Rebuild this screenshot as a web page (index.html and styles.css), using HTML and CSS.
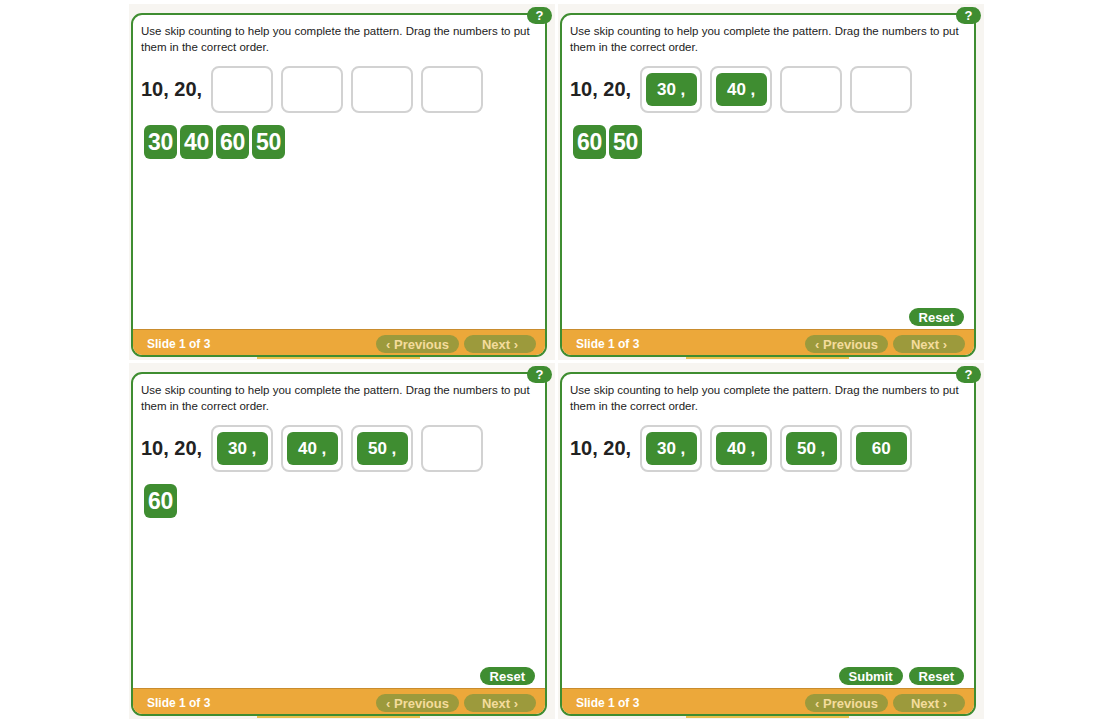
FILE: index.html
```html
<!DOCTYPE html>
<html>
<head>
<meta charset="utf-8">
<link rel="stylesheet" href="styles.css">
</head>
<body>
<div class="grid">
  <!-- Panel 1 -->
  <div class="cell">
    <div class="card">
      <div class="content">
        <p class="prompt">Use skip counting to help you complete the pattern. Drag the numbers to put them in the correct order.</p>
        <div class="pattern">
          <span class="given">10, 20,</span>
          <div class="slot"></div><div class="slot"></div><div class="slot"></div><div class="slot"></div>
        </div>
        <div class="tray">
          <span class="tile">30</span><span class="tile">40</span><span class="tile">60</span><span class="tile">50</span>
        </div>
      </div>
      <div class="footer">
        <span class="slide">Slide 1 of 3</span>
        <div class="nav"><span class="navbtn prev">‹ Previous</span><span class="navbtn next">Next ›</span></div>
      </div>
    </div>
    <div class="strip"></div>
    <span class="help">?</span>
  </div>

  <!-- Panel 2 -->
  <div class="cell">
    <div class="card">
      <div class="content">
        <p class="prompt">Use skip counting to help you complete the pattern. Drag the numbers to put them in the correct order.</p>
        <div class="pattern">
          <span class="given">10, 20,</span>
          <div class="slot"><span class="placed">30 ,</span></div><div class="slot"><span class="placed">40 ,</span></div><div class="slot"></div><div class="slot"></div>
        </div>
        <div class="tray">
          <span class="tile">60</span><span class="tile">50</span>
        </div>
      </div>
      <div class="actions"><span class="action">Reset</span></div>
      <div class="footer">
        <span class="slide">Slide 1 of 3</span>
        <div class="nav"><span class="navbtn prev">‹ Previous</span><span class="navbtn next">Next ›</span></div>
      </div>
    </div>
    <div class="strip"></div>
    <span class="help">?</span>
  </div>

  <!-- Panel 3 -->
  <div class="cell">
    <div class="card">
      <div class="content">
        <p class="prompt">Use skip counting to help you complete the pattern. Drag the numbers to put them in the correct order.</p>
        <div class="pattern">
          <span class="given">10, 20,</span>
          <div class="slot"><span class="placed">30 ,</span></div><div class="slot"><span class="placed">40 ,</span></div><div class="slot"><span class="placed">50 ,</span></div><div class="slot"></div>
        </div>
        <div class="tray">
          <span class="tile">60</span>
        </div>
      </div>
      <div class="actions"><span class="action">Reset</span></div>
      <div class="footer">
        <span class="slide">Slide 1 of 3</span>
        <div class="nav"><span class="navbtn prev">‹ Previous</span><span class="navbtn next">Next ›</span></div>
      </div>
    </div>
    <div class="strip"></div>
    <span class="help">?</span>
  </div>

  <!-- Panel 4 -->
  <div class="cell">
    <div class="card">
      <div class="content">
        <p class="prompt">Use skip counting to help you complete the pattern. Drag the numbers to put them in the correct order.</p>
        <div class="pattern">
          <span class="given">10, 20,</span>
          <div class="slot"><span class="placed">30 ,</span></div><div class="slot"><span class="placed">40 ,</span></div><div class="slot"><span class="placed">50 ,</span></div><div class="slot"><span class="placed">60</span></div>
        </div>
        <div class="tray"></div>
      </div>
      <div class="actions"><span class="action submit">Submit</span><span class="action">Reset</span></div>
      <div class="footer">
        <span class="slide">Slide 1 of 3</span>
        <div class="nav"><span class="navbtn prev">‹ Previous</span><span class="navbtn next">Next ›</span></div>
      </div>
    </div>
    <div class="strip"></div>
    <span class="help">?</span>
  </div>
</div>
</body>
</html>
```
FILE: styles.css
```css
html, body {
  margin: 0;
  padding: 0;
  background: #ffffff;
  font-family: "Liberation Sans", Arial, sans-serif;
  color: #222;
}

.grid {
  display: grid;
  grid-template-columns: 426px 426px;
  grid-auto-rows: 356px;
  column-gap: 3px;
  row-gap: 3px;
  margin-left: 129px;
  padding-top: 4px;
}

.cell {
  position: relative;
  background: #f7f5f1;
  padding: 9px 8px 0 2px;
  box-sizing: border-box;
}

.card {
  box-sizing: border-box;
  height: 344px;
  border: 2px solid #3f8d31;
  border-radius: 11px;
  background: #fff;
  overflow: hidden;
  display: flex;
  flex-direction: column;
}

.content {
  flex: 1;
  padding: 8px 8px 0 8px;
}

.prompt {
  margin: 0;
  font-size: 11.5px;
  line-height: 16px;
  color: #222;
}

.pattern {
  display: flex;
  align-items: center;
  margin-top: 11px;
  height: 47px;
}

.given {
  font-size: 20px;
  font-weight: bold;
  color: #222;
  margin-right: 9px;
}

.slot {
  box-sizing: border-box;
  width: 62px;
  height: 47px;
  border: 2px solid #d2d2d2;
  border-radius: 8px;
  margin-right: 8px;
  display: flex;
  align-items: center;
  justify-content: center;
}

.placed {
  width: 51px;
  height: 33px;
  border-radius: 6px;
  background: #3f8d31;
  color: #fff;
  font-weight: bold;
  font-size: 17px;
  display: flex;
  align-items: center;
  justify-content: center;
}

.tray {
  display: flex;
  gap: 3px;
  margin-top: 12px;
  margin-left: 3px;
}

.tile {
  width: 33px;
  height: 34px;
  border-radius: 6px;
  background: #3f8d31;
  color: #fff;
  font-weight: bold;
  font-size: 23px;
  display: flex;
  align-items: center;
  justify-content: center;
  letter-spacing: -0.3px;
}

.actions {
  display: flex;
  justify-content: flex-end;
  gap: 6px;
  padding: 0 10px 3px 0;
}

.action {
  height: 18px;
  padding: 0 10px;
  min-width: 35px;
  border-radius: 9px;
  background: #3f8d31;
  color: #fff;
  font-weight: bold;
  font-size: 13px;
  display: flex;
  align-items: center;
  justify-content: center;
}

.action.submit {
  min-width: 43px;
}

.footer {
  box-sizing: border-box;
  height: 26px;
  background: #eca83a;
  border-top: 1px solid #c98c2e;
  display: flex;
  align-items: center;
  justify-content: space-between;
  padding: 3px 9px 0 14px;
}

.slide {
  color: #fff;
  font-weight: bold;
  font-size: 12px;
}

.nav {
  display: flex;
  gap: 5px;
}

.navbtn {
  height: 18px;
  border-radius: 9px;
  background: #9c9a3c;
  color: #f4dc9c;
  font-weight: bold;
  font-size: 13px;
  display: flex;
  align-items: center;
  justify-content: center;
}

.navbtn.prev {
  width: 83px;
}

.navbtn.next {
  width: 72px;
}

.strip {
  width: 163px;
  height: 2px;
  margin-left: 126px;
  background: #e8c04a;
}

.help {
  position: absolute;
  left: 398px;
  top: 3px;
  width: 25px;
  height: 17px;
  border-radius: 9px;
  background: #3f8d31;
  color: #fff;
  font-weight: bold;
  font-size: 13px;
  display: flex;
  align-items: center;
  justify-content: center;
}
```
